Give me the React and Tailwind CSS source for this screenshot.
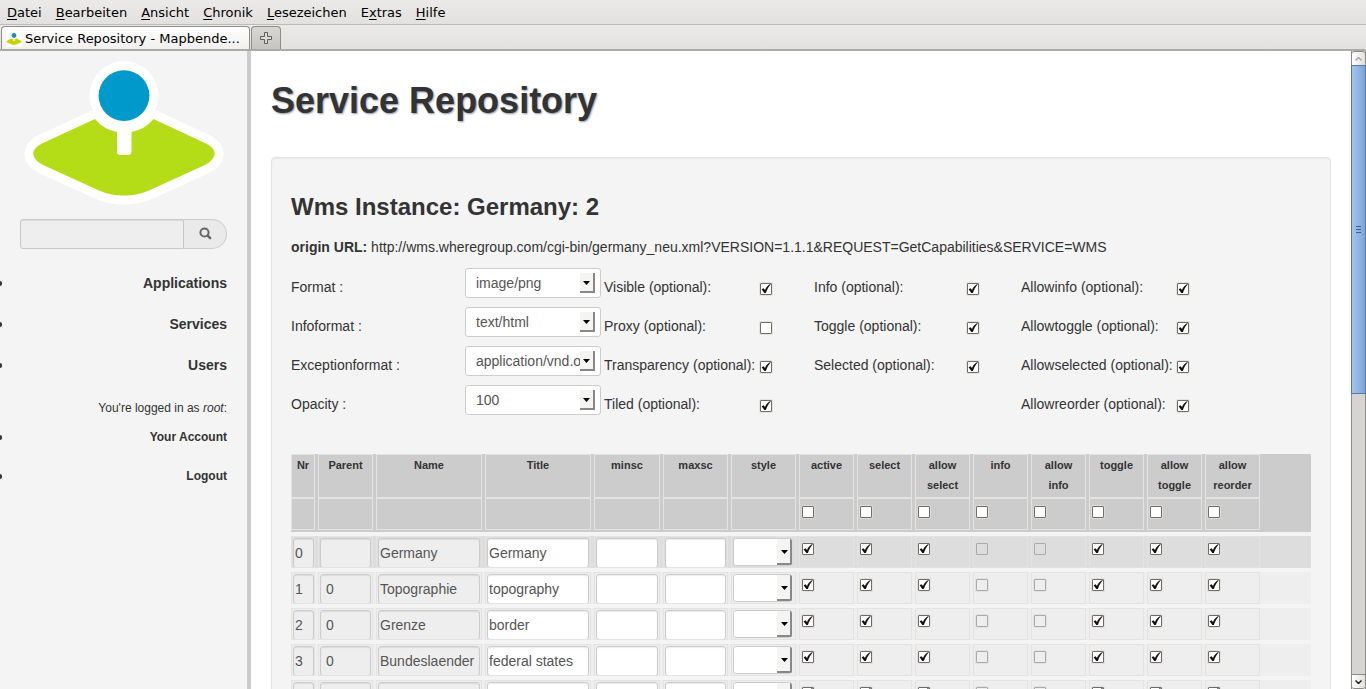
import React from 'react';

const MENU = [
  ['', 'D', 'atei'],
  ['', 'B', 'earbeiten'],
  ['', 'A', 'nsicht'],
  ['', 'C', 'hronik'],
  ['', 'L', 'esezeichen'],
  ['E', 'x', 'tras'],
  ['', 'H', 'ilfe'],
];

const BASE =
  'M95 119 L42 143.5 C30.5 149.5 30.5 157.5 42 164.5 L99 190.5 C108 194.5 116 195.5 124 195.5 C132 195.5 140 194.5 149 190.5 L206 164.5 C217.500 157.500 217.500 149.500 206 143.500 L153.500 119 A37 37 0 0 1 131.500 132 V152 Q131 155 128 155 H120.5 Q117 155 117 152 V132 A37 37 0 0 1 95 119 Z';

function Logo({ className }) {
  return (
    <svg viewBox="24 61 200 144" className={className} aria-hidden="true">
      <path d={BASE} fill="#fff" stroke="#fff" strokeWidth="18" strokeLinejoin="round" />
      <circle cx="124" cy="95.6" r="34.5" fill="#fff" />
      <path d={BASE} fill="#b4dd17" />
      <circle cx="124" cy="95.6" r="25.4" fill="#0099cc" />
    </svg>
  );
}

function Favicon() {
  return (
    <svg viewBox="0 0 16 16" className="h-4 w-4 shrink-0 bg-white" aria-hidden="true">
      <path d="M5.5 7.500L1 9.800C.2 10.300 .2 11 1 11.400L6 13.600Q8 14.400 10 13.600L15 11.400C15.800 11 15.800 10.300 15 9.800L10.500 7.500L8.700 8.500V10H7.300V8.500Z" fill="#c5d300" />
      <circle cx="8" cy="4.500" r="2.400" fill="#1d8fb8" />
    </svg>
  );
}

function MenuBar() {
  return (
    <nav className="flex h-[25px] shrink-0 items-center gap-[14px] border-b border-[#bdbbb8] bg-linear-to-b from-[#ebeae8] to-[#e2e1df] px-[7px] pt-px text-[13px] leading-4">
      {MENU.map(([a, b, c]) => (
        <button key={b} type="button">
          {a}
          <span className="underline underline-offset-2">{b}</span>
          {c}
        </button>
      ))}
    </nav>
  );
}

function TabBar() {
  return (
    <div className="flex h-[26px] shrink-0 items-end border-b-2 border-[#adaba8] bg-linear-to-b from-[#ebeae8] to-[#e2e1df] pl-px">
      <button
        type="button"
        className="flex h-[23px] w-[249px] items-center gap-[3px] rounded-t-[4px] border border-b-0 border-[#8f8d8a] bg-linear-to-b from-white to-[#f1f0ee] px-1 pt-px text-[13px] leading-4"
      >
        <Favicon />
        <span className="whitespace-nowrap">Service Repository - Mapbende...</span>
      </button>
      <button
        type="button"
        aria-label="New tab"
        className="ml-px flex h-[23px] w-[30px] items-center justify-center rounded-t-[4px] border border-b-0 border-[#8f8d8a] bg-linear-to-b from-[#d8d7d4] to-[#c6c5c2]"
      >
        <svg width="12" height="12" viewBox="0 0 12 12" aria-hidden="true">
          <path d="M4.500 .5h3v4h4v3h-4v4h-3v-4h-4v-3h4z" fill="#dddcd9" stroke="#5f5d5a" />
        </svg>
      </button>
    </div>
  );
}

function NavItem({ children, small }) {
  return (
    <li className="flex items-center justify-between">
      <span className="h-[5px] w-[2px] rounded-r-full bg-[#333]" />
      <a
        href="#"
        className={small ? 'text-[12px] leading-5 font-bold' : 'text-[14px] leading-5 font-bold'}
      >
        {children}
      </a>
    </li>
  );
}

function Sidebar() {
  return (
    <aside className="w-[251px] shrink-0 border-r-4 border-[#ccc] bg-[#f4f4f4] pt-[10px] pr-5">
      <Logo className="ml-6 w-[200px]" />
      <form className="mt-[14px] ml-5 flex h-[30px]" onSubmit={(e) => e.preventDefault()}>
        <input
          type="text"
          aria-label="Search"
          className="min-w-0 flex-1 rounded-l-[3px] border border-[#c8c8c8] bg-[#eee] px-2 text-[14px] shadow-[inset_0_1px_1px_rgba(0,0,0,0.08)]"
        />
        <button
          type="submit"
          aria-label="Search"
          className="flex w-[43px] items-center justify-center rounded-r-full border border-l-0 border-[#ccc] bg-[#eaeaea] pb-[2px]"
        >
          <svg width="13" height="13" viewBox="0 0 13 13" fill="none" stroke="#666" aria-hidden="true">
            <circle cx="5.500" cy="5.500" r="4.100" strokeWidth="2" />
            <path d="M8.600 8.600l2.600 2.600" strokeWidth="2.400" strokeLinecap="round" />
          </svg>
        </button>
      </form>
      <ul className="mt-6 flex flex-col gap-[21px]">
        <NavItem>Applications</NavItem>
        <NavItem>Services</NavItem>
        <NavItem>Users</NavItem>
      </ul>
      <p className="mt-[23px] text-right text-[12px] leading-5">
        You're logged in as <em>root</em>:
      </p>
      <ul className="mt-[9px] flex flex-col gap-[19px]">
        <NavItem small>Your Account</NavItem>
        <NavItem small>Logout</NavItem>
      </ul>
    </aside>
  );
}

function Check({ checked, disabled, id, label }) {
  return (
    <span className="grid h-3 w-3 place-items-center">
      <input
        type="checkbox"
        id={id}
        aria-label={label}
        defaultChecked={checked}
        disabled={disabled}
        className="peer m-0 h-3 w-3 appearance-none rounded-[1px] border border-[#716d66] bg-white shadow-[0_0_0_1px_rgba(225,223,218,0.8)] [grid-area:1/1] disabled:border-[#aaa] disabled:bg-transparent"
      />
      <svg
        viewBox="0 0 10 10"
        className="pointer-events-none invisible h-[10px] w-[10px] [grid-area:1/1] peer-checked:visible"
        aria-hidden="true"
      >
        <path d="M.6 5.200L2.600 4.200L4 5.900C5.200 3.400 6.800 1.400 9.200 0L9.700 .6C7.600 2.900 6 5.600 4.900 9H3.300Z" fill="#111" />
      </svg>
    </span>
  );
}

function Arrow() {
  return (
    <svg width="7" height="4" viewBox="0 0 7 4" aria-hidden="true">
      <path d="M0 0h7L3.5 4z" fill="#000" />
    </svg>
  );
}

function FormatSelect({ id, value }) {
  return (
    <span className="grid h-[30px] w-[136px]">
      <select
        id={id}
        className="h-[30px] w-full appearance-none rounded-[3px] border border-[#ccc] bg-white pr-5 pl-[10px] text-[14px] leading-5 text-[#555] [grid-area:1/1]"
      >
        <option>{value}</option>
      </select>
      <span className="pointer-events-none mr-[6px] flex h-5 w-[15px] items-center justify-center self-center justify-self-end rounded-br-[1px] border-r-2 border-b-2 border-[#888] bg-[#f4f4f3] pt-px [grid-area:1/1]">
        <Arrow />
      </span>
    </span>
  );
}

const FORM = [
  ['Format :', 'image/png', ['Visible (optional):', true], ['Info (optional):', true], ['Allowinfo (optional):', true]],
  ['Infoformat :', 'text/html', ['Proxy (optional):', false], ['Toggle (optional):', true], ['Allowtoggle (optional):', true]],
  ['Exceptionformat :', 'application/vnd.ogc.se_xml', ['Transparency (optional):', true], ['Selected (optional):', true], ['Allowselected (optional):', true]],
  ['Opacity :', '100', ['Tiled (optional):', true], null, ['Allowreorder (optional):', true]],
];

function InstanceForm() {
  return (
    <div className="mt-[11px] grid grid-cols-[174px_139px_156px_54px_153px_54px_156px_1fr] gap-y-[9px] text-[14px] leading-5">
      {FORM.map(([label, value, ...checks], r) => (
        <React.Fragment key={label}>
          <label htmlFor={'f' + r} className="mt-[9px]">
            {label}
          </label>
          <FormatSelect id={'f' + r} value={value} />
          {checks.map((c, i) =>
            c ? (
              <React.Fragment key={i}>
                <label htmlFor={'c' + r + i} className="mt-[9px] whitespace-nowrap">
                  {c[0]}
                </label>
                <span className="mt-[15px]">
                  <Check id={'c' + r + i} checked={c[1]} />
                </span>
              </React.Fragment>
            ) : (
              <span key={i} className="col-span-2" />
            )
          )}
        </React.Fragment>
      ))}
    </div>
  );
}

const HEADS = ['Nr', 'Parent', 'Name', 'Title', 'minsc', 'maxsc', 'style'];
const FLAGS = ['active', 'select', 'allow select', 'info', 'allow info', 'toggle', 'allow toggle', 'allow reorder'];
const ROWS = [
  ['0', '', 'Germany', 'Germany'],
  ['1', '0', 'Topographie', 'topography'],
  ['2', '0', 'Grenze', 'border'],
  ['3', '0', 'Bundeslaender', 'federal states'],
  ['4', '0', '', ''],
];

function Field({ label, value, locked, pad }) {
  return (
    <input
      type="text"
      aria-label={label}
      defaultValue={value}
      disabled={locked}
      className={
        'block h-[30px] w-full rounded-[3px] border border-[#ccc] bg-white text-[14px] leading-5 text-[#555] shadow-[inset_0_1px_1px_rgba(0,0,0,0.08)] disabled:bg-[#eee] ' +
        (pad ? 'pl-[5px]' : 'pl-px')
      }
    />
  );
}

function Cell({ children, tone, flush }) {
  return (
    <td className={'border-b-4 border-[#f4f4f4] p-0 pr-[3px] ' + tone}>
      <div className={'h-8 overflow-hidden border border-[#e3e3e3] pt-px pl-px ' + (flush ? '' : 'pr-px')}>
        {children}
      </div>
    </td>
  );
}

function LayerRow({ row }) {
  const [nr, parent, name, title] = row;
  const tone = nr === '0' ? 'bg-[#ddd]' : 'bg-[#eee]';
  return (
    <tr>
      <Cell tone={tone} flush>
        <Field label="Nr" value={nr} locked />
      </Cell>
      <Cell tone={tone}>
        <Field label="Parent" value={parent} locked pad />
      </Cell>
      <Cell tone={tone}>
        <Field label="Name" value={name} locked />
      </Cell>
      <Cell tone={tone}>
        <Field label="Title" value={title} />
      </Cell>
      <Cell tone={tone}>
        <Field label="minsc" value="" />
      </Cell>
      <Cell tone={tone}>
        <Field label="maxsc" value="" />
      </Cell>
      <Cell tone={tone}>
        <span className="mr-[2px] grid">
          <select
            aria-label="style"
            className="h-7 w-full appearance-none rounded-[3px] border border-[#ccc] bg-white [grid-area:1/1]"
          >
            <option></option>
          </select>
          <span className="pointer-events-none flex h-[26px] w-[15px] items-center justify-center self-center justify-self-end rounded-r-[2px] border-r-2 border-b-2 border-[#888] bg-[#f4f4f3] pt-[2px] pl-px [grid-area:1/1]">
            <Arrow />
          </span>
        </span>
      </Cell>
      {FLAGS.map((f) => {
        const off = f === 'info' || f === 'allow info';
        return (
          <Cell key={f} tone={tone}>
            <div className="pt-[5px] pl-px">
              <Check label={f} checked={!off} disabled={off} />
            </div>
          </Cell>
        );
      })}
      <td className={'border-b-4 border-[#f4f4f4] ' + tone} />
    </tr>
  );
}

function LayerTable() {
  return (
    <table className="mt-[39px] w-full table-fixed border-separate border-spacing-0">
      <colgroup>
        <col className="w-[27px]" />
        <col className="w-[58px]" />
        <col className="w-[109px]" />
        <col className="w-[109px]" />
        <col className="w-[69px]" />
        <col className="w-[68px]" />
        <col className="w-[68px]" />
        {FLAGS.map((f) => (
          <col key={f} className="w-[58px]" />
        ))}
        <col />
      </colgroup>
      <thead className="bg-[#ccc] text-[11px] leading-5 font-bold">
        <tr>
          {[...HEADS, ...FLAGS].map((h) => (
            <th key={h} scope="col" className="p-0 pr-[3px] align-top">
              <div className="h-11 border border-[#e3e3e3]">
                {h.split(' ').map((w) => (
                  <span key={w} className="block">
                    {w}
                  </span>
                ))}
              </div>
            </th>
          ))}
          <td />
        </tr>
        <tr>
          {HEADS.map((h) => (
            <td key={h} className="border-b-4 border-[#f4f4f4] p-0 pr-[3px] pb-[2px]">
              <div className="h-8 border border-[#e3e3e3]" />
            </td>
          ))}
          {FLAGS.map((f) => (
            <td key={f} className="border-b-4 border-[#f4f4f4] p-0 pr-[3px] pb-[2px]">
              <div className="h-8 border border-[#e3e3e3] pt-[7px] pl-[2px]">
                <Check label={'all ' + f} />
              </div>
            </td>
          ))}
          <td className="border-b-4 border-[#f4f4f4]" />
        </tr>
      </thead>
      <tbody>
        {ROWS.map((r) => (
          <LayerRow key={r[0]} row={r} />
        ))}
      </tbody>
    </table>
  );
}

function ScrollBar() {
  return (
    <div className="flex w-[15px] shrink-0 flex-col border-x border-[#8b8986] bg-[#d5d4d2]">
      <button
        type="button"
        aria-label="Scroll up"
        className="flex h-[14px] shrink-0 items-center justify-center rounded-t-[3px] border-t border-[#8b8986] bg-linear-to-r from-white to-[#e2e1df]"
      >
        <svg width="7" height="4" viewBox="0 0 7 4" fill="none" stroke="#aaa" strokeWidth="1.500" aria-hidden="true">
          <path d="M.5 3.5l3-3 3 3" />
        </svg>
      </button>
      <div className="-mx-px flex basis-[329px] flex-col items-center justify-center gap-[2px] border border-[#5578a8] bg-linear-to-r from-[#a5c4ea] to-[#7fa4d6]">
        <span className="h-px w-[5px] bg-[#3a5f92]" />
        <span className="h-px w-[5px] bg-[#3a5f92]" />
        <span className="h-px w-[5px] bg-[#3a5f92]" />
      </div>
      <button
        type="button"
        aria-label="Scroll down"
        className="mt-auto flex h-[15px] shrink-0 items-center justify-center rounded-b-[3px] border-y border-[#8b8986] bg-linear-to-r from-white to-[#e2e1df]"
      >
        <svg width="7" height="4" viewBox="0 0 7 4" fill="none" stroke="#222" strokeWidth="1.5" aria-hidden="true">
          <path d="M.5 .5l3 3 3-3" />
        </svg>
      </button>
    </div>
  );
}

export default function App() {
  return (
    <div className="flex h-screen flex-col overflow-hidden bg-white font-['DejaVu_Sans',sans-serif] text-black">
      <MenuBar />
      <TabBar />
      <div className="flex min-h-0 flex-1 overflow-hidden font-['Liberation_Sans',Arial,sans-serif] text-[#333]">
        <Sidebar />
        <main className="min-w-0 flex-1 overflow-hidden px-5 pt-[30px]">
          <h1 className="text-[36px] leading-10 font-bold [text-shadow:1px_1px_2px_#8a93a3]">Service Repository</h1>
          <section className="mt-9 rounded-[4px] border border-[#e3e3e3] bg-[#f4f4f4] p-[19px] shadow-[inset_0_1px_1px_rgba(0,0,0,0.05)]">
            <h2 className="mt-[10px] text-[24px] leading-10 font-bold">Wms Instance: Germany: 2</h2>
            <p className="mt-[10px] text-[14px] leading-5">
              <b>origin URL:</b>{' '}
              http://wms.wheregroup.com/cgi-bin/germany_neu.xml?VERSION=1.1.1&amp;REQUEST=GetCapabilities&amp;SERVICE=WMS
            </p>
            <InstanceForm />
            <LayerTable />
          </section>
        </main>
        <ScrollBar />
      </div>
    </div>
  );
}
